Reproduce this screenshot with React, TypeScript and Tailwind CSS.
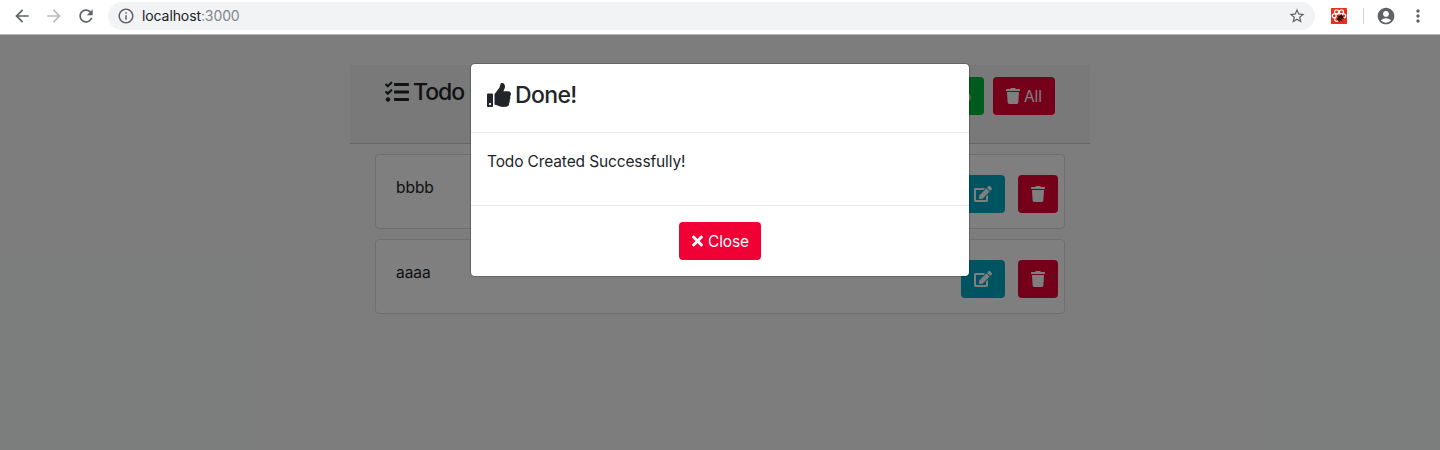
import { FaEdit, FaTasks, FaThumbsUp, FaTimes } from "react-icons/fa";
import {
  MdAccountCircle,
  MdArrowBack,
  MdArrowForward,
  MdInfoOutline,
  MdMoreVert,
  MdRefresh,
  MdStarBorder,
} from "react-icons/md";

function Trash({ className = "" }: { className?: string }) {
  return (
    <svg viewBox="0 0 448 512" fill="currentColor" className={`h-4 w-3.5 shrink-0 ${className}`}>
      <path d="M0 84V56c0-13.3 10.7-24 24-24h112l9.4-18.7c4-8.2 12.3-13.3 21.4-13.3h114.3c9.1 0 17.4 5.1 21.5 13.3L312 32h112c13.3 0 24 10.7 24 24v28c0 6.6-5.4 12-12 12H12C5.4 96 0 90.6 0 84zm415.2 56.7L394.8 467c-1.6 25.3-22.6 45-47.9 45H101.1c-25.3 0-46.3-19.7-47.9-45L32.8 140.7c-.4-6.9 5.1-12.7 12-12.7h358.5c6.8 0 12.3 5.8 11.9 12.7z" />
    </svg>
  );
}

function Extension() {
  return (
    <svg viewBox="0 0 16 16" className="size-4">
      <rect width="16" height="16" rx=".6" fill="#e8301c" />
      <g fill="none" stroke="#fff" strokeWidth="1.2">
        <circle cx="5.6" cy="3.9" r="2" />
        <circle cx="10.4" cy="3.9" r="2" />
        <circle cx="3.2" cy="7.8" r="2" />
        <circle cx="12.8" cy="7.8" r="2" />
        <path d="M4.2 9.6c-1 2.2-.4 3.8 1.4 3.8 1 0 1.8-.6 2.4-1.4M5 6.5c2-1 4-1 6 0" />
      </g>
      <ellipse cx="9.4" cy="9.9" rx="3.2" ry="2.2" fill="#29100d" transform="rotate(-45 9.4 9.9)" />
      <path d="M6.3 7.5l5 6M10 6l2.8 5M6 11.2l3 2.6" stroke="#29100d" strokeWidth=".8" />
      <path d="M8.2 9l2.4 2.6" stroke="#e8301c" strokeWidth=".5" />
    </svg>
  );
}

function Toolbar() {
  return (
    <div className="flex h-[35px] shrink-0 items-start border-b border-[#b5b6b7] bg-white text-[#5f6368]">
      <div className="flex h-8 w-full items-center">
        <MdArrowBack className="ml-3 size-5" />
        <MdArrowForward className="ml-3 size-5 text-[#babcbe]" />
        <MdRefresh className="ml-3 size-5" />
        <div className="ml-3 flex h-7 w-[1207px] items-center rounded-full bg-[#f1f3f4] pr-[9px] pl-[9px]">
          <MdInfoOutline className="size-[18px]" />
          <span className="ml-[7px] text-sm tracking-[-0.1px] text-[#202124]">
            localhost<span className="text-[#80868b]">:3000</span>
          </span>
          <MdStarBorder className="ml-auto size-[18px]" />
        </div>
        <div className="ml-4">
          <Extension />
        </div>
        <div className="ml-4 h-4 w-px bg-[#cfd1d3]" />
        <MdAccountCircle className="ml-3 size-5" />
        <MdMoreVert className="ml-3 size-5" />
      </div>
    </div>
  );
}

function TodoCard({ title }: { title: string }) {
  return (
    <div className="mx-[25px] mb-2.5 flex h-[75px] justify-between rounded border border-[#dfdfdf] bg-white pr-1.5 pl-5">
      <span className="mt-[21px] text-[15.5px] leading-6 tracking-[-0.05px]">{title}</span>
      <div className="mt-5 flex gap-[13px] text-white">
        <button className="flex h-[38px] w-11 items-center justify-center rounded bg-[#00a9c2]">
          <FaEdit className="h-4 w-[18px]" />
        </button>
        <button className="flex h-[38px] w-10 items-center justify-center rounded bg-[#eb0032]">
          <Trash />
        </button>
      </div>
    </div>
  );
}

function Modal() {
  return (
    <div className="flex h-[214px] w-[500px] flex-col rounded-[5px] border border-black/20 bg-white bg-clip-padding">
      <div className="flex h-[69px] items-start border-b border-[#e5e7e9] px-4 pt-[15px]">
        <h2 className="flex items-center text-[23px] leading-[29px] font-medium tracking-[-0.65px]">
          <FaThumbsUp className="mr-1 size-6" />
          <span className="pt-0.5">Done!</span>
        </h2>
      </div>
      <div className="h-[72px] px-4 pt-[17px] text-[15.5px] leading-6 tracking-[-0.13px]">
        Todo Created Successfully!
      </div>
      <div className="flex flex-1 justify-center border-t border-[#e5e7e9] pt-4">
        <button className="flex h-[38px] w-[82px] items-center justify-center rounded bg-[#f00034] text-[15.5px] tracking-[-0.15px] text-white">
          <FaTimes className="mr-1 h-4 w-[13px]" />
          <span className="pt-0.5">Close</span>
        </button>
      </div>
    </div>
  );
}

export default function App() {
  return (
    <div className="flex h-[450px] w-[1440px] flex-col overflow-hidden font-['Inter','Liberation_Sans',sans-serif] text-[#212529]">
      <Toolbar />
      <div className="relative flex-1 overflow-hidden bg-[#f8fbf9] pt-[30px]">
        <div className="mx-auto w-[740px]">
          <header className="mb-2.5 flex h-[79px] items-start justify-between border-b border-[#cccfcd] bg-[#f0f3f1] pr-[35px] pl-[35px]">
            <h1 className="mt-[11px] flex items-center text-[23px] leading-[29px] font-medium tracking-[-1px]">
              <FaTasks className="mr-1 size-6" />
              <span className="pt-0.5">Todo</span>
            </h1>
            <div className="mt-3 flex gap-[9px] text-[15.5px] text-white">
              <button className="flex h-[38px] w-[92px] items-center justify-end rounded bg-[#00b83a] pr-[13px] tracking-[-0.1px]">
                <span className="pt-0.5">Todo</span>
              </button>
              <button className="flex h-[38px] w-[62px] items-center justify-center rounded bg-[#eb0032]">
                <Trash className="mr-1" />
                <span className="pt-0.5">All</span>
              </button>
            </div>
          </header>
          <TodoCard title="bbbb" />
          <TodoCard title="aaaa" />
        </div>
        <div className="absolute inset-0 flex items-start justify-center bg-black/50 pt-7">
          <Modal />
        </div>
      </div>
    </div>
  );
}
